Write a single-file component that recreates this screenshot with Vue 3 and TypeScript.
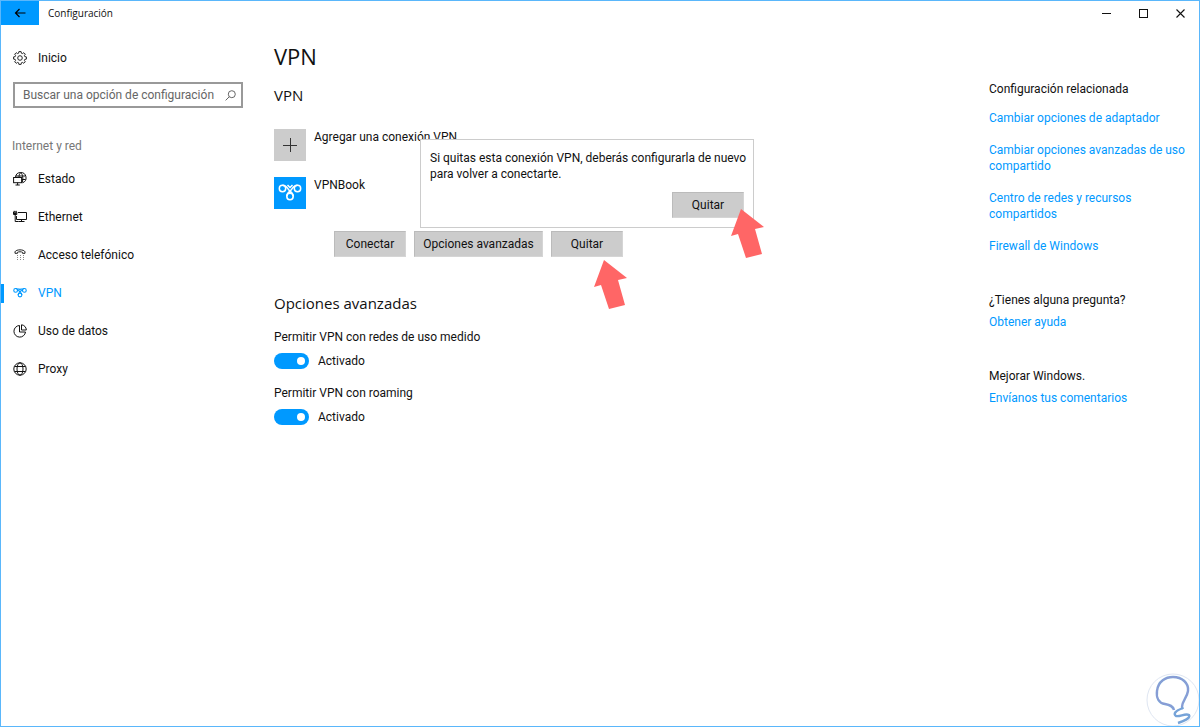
<script setup lang="ts">
import { ref } from 'vue'

interface NavItem {
  id: string
  label: string
}

interface Toggle {
  id: string
  label: string
  on: boolean
}

const navItems: NavItem[] = [
  { id: 'estado', label: 'Estado' },
  { id: 'ethernet', label: 'Ethernet' },
  { id: 'dialup', label: 'Acceso telefónico' },
  { id: 'vpn', label: 'VPN' },
  { id: 'datos', label: 'Uso de datos' },
  { id: 'proxy', label: 'Proxy' },
]

const active = ref('vpn')
const query = ref('')

const toggles = ref<Toggle[]>([
  { id: 'metered', label: 'Permitir VPN con redes de uso medido', on: true },
  { id: 'roaming', label: 'Permitir VPN con roaming', on: true },
])

const relatedLinks: string[] = [
  'Cambiar opciones de adaptador',
  'Cambiar opciones avanzadas de uso compartido',
  'Centro de redes y recursos compartidos',
  'Firewall de Windows',
]
</script>

<template>
  <div class="window">
    <header class="titlebar">
      <button class="back" type="button" aria-label="Atrás">
        <svg width="12" height="10" viewBox="0 0 12 10" fill="none" stroke="#000" stroke-width="1.2">
          <path d="M11.5 5H1.5M5.5 1L1.5 5L5.5 9" />
        </svg>
      </button>
      <span class="window-title">Configuración</span>
      <div class="window-controls">
        <button type="button" aria-label="Minimizar">
          <svg width="9" height="9" viewBox="0 0 9 9" stroke="#111"><path d="M0 4.5H9" /></svg>
        </button>
        <button type="button" aria-label="Maximizar">
          <svg width="9" height="9" viewBox="0 0 9 9" fill="none" stroke="#111"><rect x=".5" y=".5" width="8" height="8" /></svg>
        </button>
        <button type="button" aria-label="Cerrar">
          <svg width="9" height="9" viewBox="0 0 9 9" fill="none" stroke="#111" stroke-width="1.1"><path d="M.5 .5L8.500 8.500M8.500 .5L.5 8.500" /></svg>
        </button>
      </div>
    </header>

    <div class="body">
      <aside class="sidebar">
        <a class="home" href="#inicio">
          <svg class="icon" viewBox="0 0 14 14" fill="none" stroke="#111" stroke-width=".9">
            <path d="M5.900 .6H8.100L8.400 2.200L9.400 2.600L10.800 1.700L12.300 3.200L11.400 4.600L11.800 5.600L13.400 5.900V8.100L11.800 8.400L11.400 9.400L12.300 10.800L10.800 12.300L9.400 11.400L8.400 11.800L8.100 13.400H5.900L5.600 11.800L4.600 11.400L3.200 12.300L1.700 10.800L2.600 9.400L2.200 8.400L.6 8.100V5.900L2.200 5.600L2.600 4.600L1.700 3.200L3.200 1.700L4.600 2.600L5.600 2.200Z" />
            <circle cx="7" cy="7" r="2.300" />
          </svg>
          <span>Inicio</span>
        </a>

        <div class="search">
          <input v-model="query" type="text" placeholder="Buscar una opción de configuración" aria-label="Buscar una opción de configuración">
          <svg width="11" height="11" viewBox="0 0 11 11" fill="none" stroke="#666">
            <circle cx="6.800" cy="4.200" r="3.500" />
            <path d="M4.300 6.700L.6 10.400" />
          </svg>
        </div>

        <h2 class="group-title">Internet y red</h2>
        <nav class="nav">
          <a
            v-for="item in navItems"
            :key="item.id"
            :href="'#' + item.id"
            :class="{ active: active === item.id }"
            @click.prevent="active = item.id"
          >
            <svg v-if="item.id === 'estado'" class="icon" viewBox="0 0 14 14" fill="none" stroke="#111">
              <path d="M2.500 5A5.300 5.300 0 1 1 9.500 10.800M2.800 4H12M9 7.500H12.500M6 5.500C6 3 6.800 .9 7.700 .9S10 3.500 9.800 7.500L9.200 10.500" />
              <rect x=".6" y="5.500" width="8" height="5.200" fill="#fff" />
              <path d="M4.600 10.700V13M2.500 13H6.800" />
            </svg>
            <svg v-else-if="item.id === 'ethernet'" class="icon" viewBox="0 0 14 14" fill="none" stroke="#111">
              <path d="M5 2.500H13.500V9.500H3.500V6M8.500 9.500V12M5.500 11.500H11.500" />
              <path d="M.5 2V4.500H3.800V2ZM1.200 2V.8M3.100 2V.8M2.200 4.500V11.500H5.500" />
              <path d="M.8 3.300H3.500" stroke-width="1.600" />
            </svg>
            <svg v-else-if="item.id === 'dialup'" class="icon" viewBox="0 0 14 14" fill="none" stroke="#222">
              <path d="M2 5.300V3.800C3 1.200 11 1.200 12 3.800V5.300H9.500V4.300C8.500 3.600 5.500 3.600 4.500 4.300V5.300Z" />
              <path d="M4 7.500H11M4 9.500H11M4 11.500H11" stroke="#888" stroke-dasharray="1 2" />
            </svg>
            <svg v-else-if="item.id === 'vpn'" class="icon" viewBox="0 0 24 18" fill="none" stroke="#0099ff" stroke-width="1.900">
              <circle cx="4.500" cy="4.500" r="3.200" />
              <circle cx="19.500" cy="4.500" r="3.200" />
              <circle cx="12" cy="12.500" r="3.200" />
              <path d="M4.500 1.300C9.500 1.300 9 5 12 7.200C14 8.700 15.200 10 15.200 12.500M19.500 1.300C14.500 1.300 15 5 12 7.200C10 8.700 8.800 10 8.800 12.500M9.500 1L12 3.500L14.500 1" />
            </svg>
            <svg v-else-if="item.id === 'datos'" class="icon" viewBox="0 0 14 14" fill="none" stroke="#111">
              <path d="M6.500 1.500A5.800 5.800 0 1 0 12.500 8H6.500Z" />
              <path d="M8.500 .8A5.200 5.200 0 0 1 13.300 6H8.500Z" />
            </svg>
            <svg v-else class="icon" viewBox="0 0 14 14" fill="none" stroke="#111">
              <circle cx="7" cy="7" r="6.200" />
              <ellipse cx="7" cy="7" rx="3" ry="6.200" />
              <path d="M1.500 4.500H12.500M1.500 9.500H12.500" />
            </svg>
            <span>{{ item.label }}</span>
          </a>
        </nav>
      </aside>

      <main class="content">
        <h1>VPN</h1>

        <section>
          <h2>VPN</h2>
          <button class="connection" type="button">
            <span class="tile tile-add">
              <svg width="14" height="14" viewBox="0 0 14 14" stroke="#333"><path d="M0 7.500H14M7.500 0V14" /></svg>
            </span>
            <span>Agregar una conexión VPN</span>
          </button>
          <button class="connection" type="button">
            <span class="tile tile-vpn">
              <svg width="24" height="18" viewBox="0 0 24 18" fill="none" stroke="#fff" stroke-width="1.500">
                <circle cx="4.500" cy="4.500" r="3.200" />
                <circle cx="19.500" cy="4.500" r="3.200" />
                <circle cx="12" cy="12.500" r="3.200" />
                <path d="M4.500 1.300C9.500 1.300 9 5 12 7.200C14 8.700 15.200 10 15.200 12.500M19.500 1.300C14.500 1.300 15 5 12 7.200C10 8.700 8.800 10 8.800 12.500M9.500 1L12 3.500L14.500 1" />
              </svg>
            </span>
            <span>VPNBook</span>
          </button>

          <div class="actions">
            <button class="btn" type="button">Conectar</button>
            <button class="btn btn-wide" type="button">Opciones avanzadas</button>
            <div class="remove">
              <button class="btn" type="button">Quitar</button>
              <svg class="pointer" width="34" height="51" viewBox="0 0 34 51"><path d="M11 1L34 19L25 21L32 46L16 50L8 26L1 28Z" fill="#ff6666" /></svg>
              <div class="flyout" role="dialog" aria-label="Quitar conexión VPN">
                <p>Si quitas esta conexión VPN, deberás configurarla de nuevo para volver a conectarte.</p>
                <div class="confirm">
                  <button class="btn" type="button">Quitar</button>
                  <svg class="pointer" width="34" height="51" viewBox="0 0 34 51"><path d="M11 1L34 19L25 21L32 46L16 50L8 26L1 28Z" fill="#ff6666" /></svg>
                </div>
              </div>
            </div>
          </div>
        </section>

        <section class="advanced">
          <h2>Opciones avanzadas</h2>
          <div v-for="toggle in toggles" :key="toggle.id" class="setting">
            <label :for="toggle.id">{{ toggle.label }}</label>
            <div class="switch-row">
              <input :id="toggle.id" v-model="toggle.on" class="switch" type="checkbox" role="switch">
              <span>{{ toggle.on ? 'Activado' : 'Desactivado' }}</span>
            </div>
          </div>
        </section>
      </main>

      <aside class="related">
        <section>
          <h3>Configuración relacionada</h3>
          <ul>
            <li v-for="link in relatedLinks" :key="link"><a href="#">{{ link }}</a></li>
          </ul>
        </section>
        <section>
          <h3>¿Tienes alguna pregunta?</h3>
          <a href="#ayuda">Obtener ayuda</a>
        </section>
        <section>
          <h3>Mejorar Windows.</h3>
          <a href="#comentarios">Envíanos tus comentarios</a>
        </section>
      </aside>
    </div>

    <svg class="bulb" width="54" height="54" viewBox="0 0 54 54" fill="none" aria-hidden="true">
      <circle cx="27" cy="27" r="26" fill="#fff" stroke="#dfe6f2" />
      <path d="M28 37C27 33 24 32 19 31C13 30 10 25 11 18C12 8 20 4 27 4C36 4 43 10 42 18C41 25 36 28 36 34L37 36" stroke="#7ba5d8" stroke-width="2.400" />
      <path d="M28 37C27 33 24 32 19 31C13 30 10 25 11 18C12 8 20 4 27 4C36 4 43 10 42 18C41 25 36 28 36 34" stroke="#9a92d0" stroke-width=".8" />
      <path d="M37 35C29 38 27 41 30 43C34 44 39 40 43 42C45 45 38 48 32 50" stroke="#76a3d8" stroke-width="2.400" />
    </svg>
  </div>
</template>

<style>
body {
  margin: 0;
  background: #fff;
}
</style>

<style scoped>
.window,
.window * {
  box-sizing: border-box;
}

.window {
  position: relative;
  display: flex;
  flex-direction: column;
  min-height: 100vh;
  overflow: hidden;
  border: 1px solid #5ab7fb;
  background: #fff;
  color: #111;
  font-family: Roboto, 'Open Sans', sans-serif;
  font-size: 12px;
  line-height: 16px;
}

h1,
h2,
h3,
p,
ul {
  margin: 0;
  padding: 0;
  font-weight: 400;
}

button,
input {
  font: inherit;
  color: inherit;
}

a {
  color: #0099ff;
  text-decoration: none;
}

.titlebar {
  display: flex;
  height: 24px;
}

.back {
  display: flex;
  align-items: center;
  justify-content: center;
  width: 38px;
  padding: 0;
  border: 0;
  background: #0099ff;
}

.window-title {
  margin-left: 9px;
  font-family: 'Open Sans', sans-serif;
  font-size: 10px;
  line-height: 24px;
}

.window-controls {
  display: flex;
  margin-left: auto;
}

.window-controls button {
  display: flex;
  align-items: center;
  justify-content: center;
  width: 37px;
  padding: 0;
  border: 0;
  background: none;
}

.body {
  display: flex;
  flex: 1;
}

.sidebar {
  flex: 0 0 242px;
  padding-top: 25px;
}

.icon {
  flex: none;
  width: 14px;
  height: 14px;
}

.home,
.nav a {
  display: flex;
  align-items: center;
  gap: 11px;
  padding-left: 12px;
  color: #111;
}

.search {
  display: flex;
  align-items: center;
  height: 26px;
  margin: 16px 0 0 12px;
  padding: 0 5px 0 8px;
  border: 2px solid #999;
}

.search input {
  flex: 1;
  min-width: 0;
  padding: 0;
  border: 0;
  outline: 0;
  background: none;
}

.search input::placeholder {
  color: #666;
  opacity: 1;
}

.group-title {
  margin: 30px 0 6px 11px;
  font-size: 12px;
  line-height: 16px;
  color: #777;
}

.nav a {
  height: 38px;
}

.nav a.active {
  position: relative;
  color: #0099ff;
}

.nav a.active::before {
  content: '';
  position: absolute;
  left: 0;
  width: 3px;
  height: 19px;
  background: #0099ff;
}

.content {
  flex: 1;
  padding: 15px 0 0 31px;
}

h1 {
  font-family: 'Open Sans', sans-serif;
  font-size: 22px;
  line-height: 32px;
}

h2 {
  font-size: 15px;
  line-height: 20px;
}

.content h2 {
  font-family: 'Open Sans', sans-serif;
}

.content section h2 {
  margin-top: 13px;
}

.connection {
  display: flex;
  gap: 8px;
  margin-top: 16px;
  padding: 0;
  border: 0;
  background: none;
}

.content h2 + .connection {
  margin-top: 24px;
}

.tile {
  display: flex;
  align-items: center;
  justify-content: center;
  width: 32px;
  height: 32px;
}

.tile-add {
  background: #ccc;
}

.tile-vpn {
  background: #0099ff;
}

.actions {
  display: flex;
  gap: 8px;
  margin: 22px 0 0 60px;
}

.btn {
  width: 72px;
  height: 26px;
  padding: 0;
  border: 1px solid #bbb;
  border-right-color: #d5d5d5;
  border-bottom-color: #d5d5d5;
  background: #ccc;
}

.btn-wide {
  width: 129px;
}

.remove,
.confirm {
  position: relative;
  width: 72px;
}

.pointer {
  position: absolute;
  z-index: 2;
  top: 28px;
  left: 42px;
}

.flyout {
  position: absolute;
  bottom: 29px;
  left: 50%;
  width: 334px;
  padding: 10px 4px 9px 9px;
  border: 1px solid #ccc;
  background: #fff;
  transform: translateX(-50%);
}

.confirm {
  margin: 10px 5px 0 auto;
}

.confirm .pointer {
  top: 16px;
  left: 58px;
}

.content .advanced h2 {
  margin-top: 36px;
}

.setting {
  margin-top: 16px;
}

.setting label {
  display: block;
}

.switch-row {
  display: flex;
  align-items: center;
  gap: 9px;
  height: 16px;
  margin-top: 8px;
}

.switch {
  appearance: none;
  display: flex;
  align-items: center;
  width: 35px;
  height: 16px;
  margin: 0;
  padding: 0 4px;
  border-radius: 8px;
  background: #999;
}

.switch::before {
  content: '';
  width: 8px;
  height: 8px;
  border-radius: 50%;
  background: #fff;
}

.switch:checked {
  justify-content: flex-end;
  background: #0099ff;
}

.related {
  flex: 0 0 210px;
  padding: 56px 12px 0 0;
}

.related section {
  margin-bottom: 38px;
}

.related h3 {
  margin-bottom: 6px;
  font-size: 12px;
}

.related ul {
  list-style: none;
}

.related li {
  margin-bottom: 16px;
}

.related h3 + ul {
  margin-top: 13px;
}

.bulb {
  position: absolute;
  right: -1px;
  bottom: -1px;
}
</style>
